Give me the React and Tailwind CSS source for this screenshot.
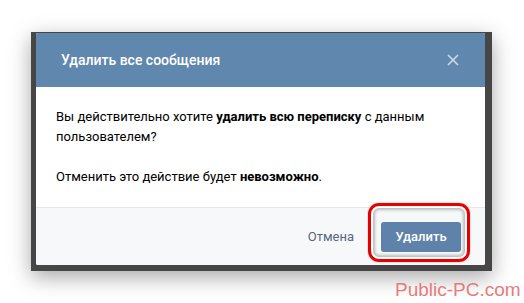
export default function App() {
  return (
    <div className="relative w-[524px] h-[303px] bg-white overflow-hidden" style={{ fontFamily: 'Roboto, "Open Sans", Arial, sans-serif' }}>
      <div className="absolute left-[31px] top-[32px] w-[461px] h-[239px] bg-[#464646] shadow-[0_6px_20px_rgba(0,0,0,0.35)] pl-[5px] pt-[1px]">
        <div className="w-[449px] h-[232px] bg-white flex flex-col rounded-[2px] overflow-hidden">
          <div className="h-[54px] bg-[#6087ae] flex items-center justify-between pl-[25px] pr-[26px] shrink-0">
            <span className="text-white text-[14px] font-medium">Удалить все сообщения</span>
            <svg width="12" height="12" viewBox="0 0 12 12">
              <path d="M1 1L11 11M11 1L1 11" stroke="#cdd8e5" strokeWidth="1.7" />
            </svg>
          </div>
          <div className="px-[20px] pt-[20px] pb-[20px] text-[13px] leading-[20px] text-[#000]">
            <p>Вы действительно хотите <b className="font-bold">удалить всю переписку</b> с данным пользователем?</p>
            <p className="mt-[20px]">Отменить это действие будет <b className="font-bold">невозможно</b>.</p>
          </div>
          <div className="flex-1 bg-[#f7f8fa] border-t border-[#e7e8ec] flex items-center justify-end pr-[24px]">
            <span className="text-[13px] text-[#55677d] mr-[27px]">Отмена</span>
            <div className="relative">
              <div className="w-[80px] h-[30px] rounded-[3px] bg-[#5e82a9] flex items-center justify-center text-white text-[13px] font-medium">Удалить</div>
              <div className="absolute left-[-13px] top-[-19px] w-[102px] h-[59px] rounded-[11px] border-[3px] border-[#e60000] shadow-[inset_0_0_0_2px_#fff,inset_0_0_3px_4px_rgba(0,0,0,0.25),0_0_2px_rgba(0,0,0,0.3)]"></div>
            </div>
          </div>
        </div>
      </div>
      <div className="absolute left-[395px] top-[279px] text-[19px] leading-[22px] text-[#e77b7b]" style={{ fontFamily: '"Liberation Sans", Arial, sans-serif' }}>Public-PC.com</div>
    </div>
  );
}
